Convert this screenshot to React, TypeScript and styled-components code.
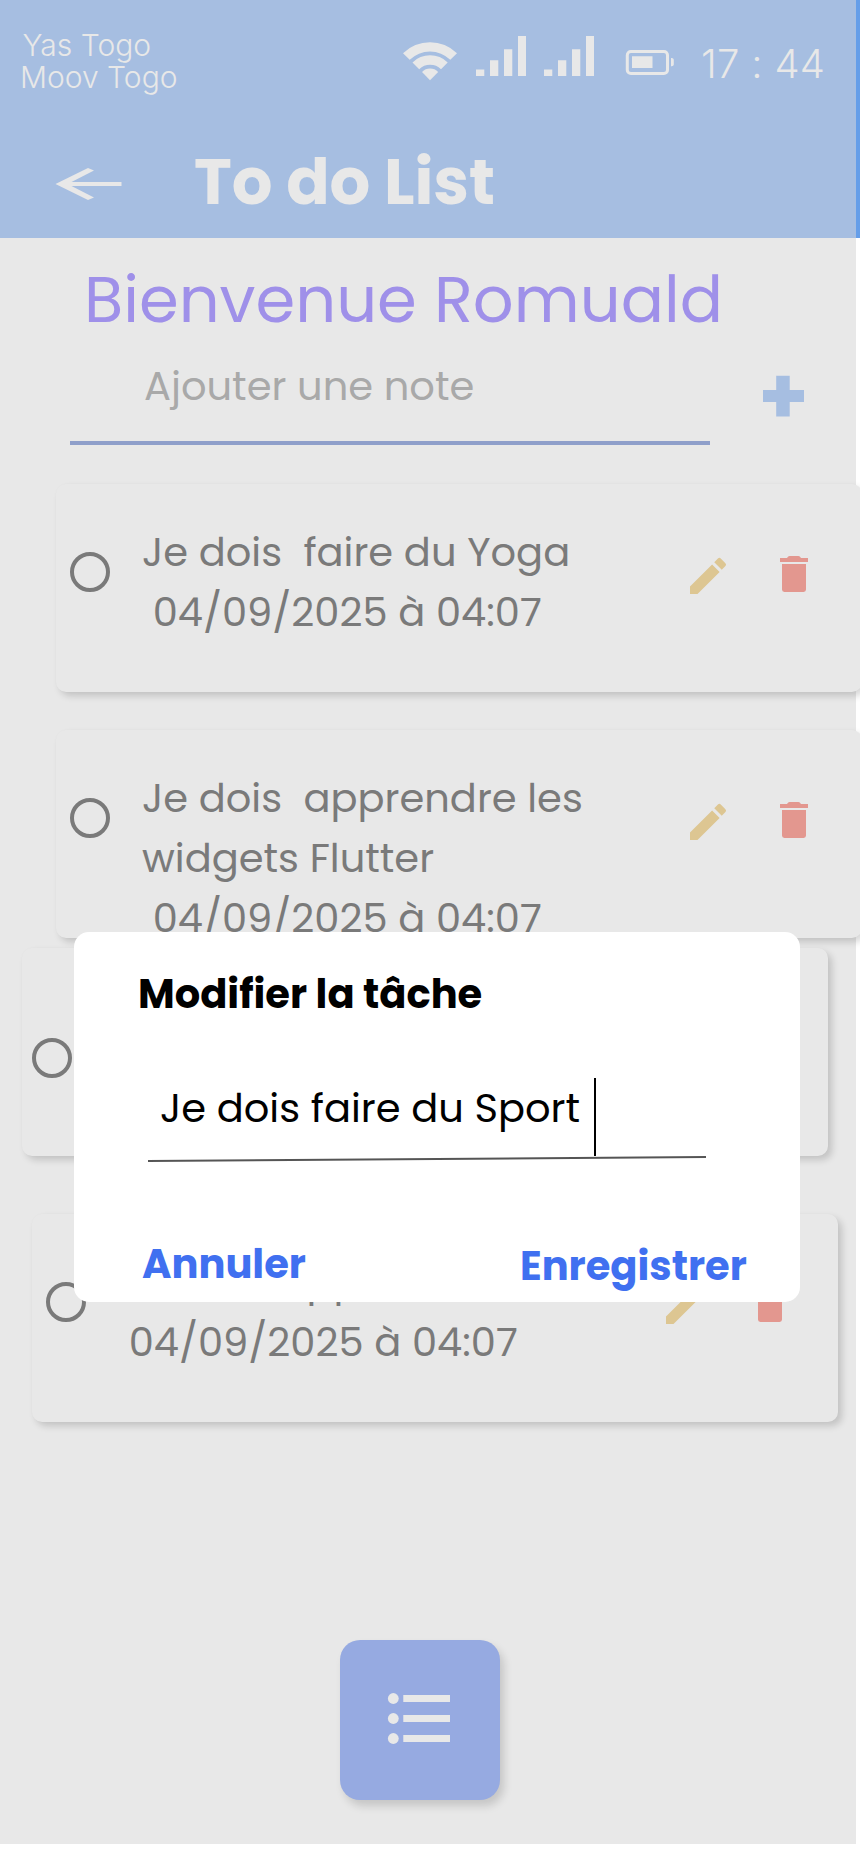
import React from "react";
import styled, { createGlobalStyle } from "styled-components";

const INK = "#e8e8e8";
const poppins = `"Poppins", "Inter", sans-serif`;

const GlobalStyle = createGlobalStyle`
  * { box-sizing: border-box; }
  html, body { margin: 0; padding: 0; background: #ffffff; }
  body { width: 860px; height: 1864px; overflow: hidden; }
  button { border: 0; padding: 0; background: none; font: inherit; color: inherit; display: block; }
`;

const Page = styled.div`
  position: relative;
  width: 860px;
  height: 1864px;
  overflow: hidden;
  background: #ffffff;
  font-family: ${poppins};
`;

const Screen = styled.main`
  width: 856px;
  height: 1844px;
  display: flex;
  flex-direction: column;
  background: ${INK};
`;

const Header = styled.header`
  flex: none;
  width: 860px;
  height: 238px;
  background: #a6bee1;
  border-right: 4px solid #659ee9;
  color: ${INK};
`;

const StatusBar = styled.div`
  display: flex;
  align-items: flex-start;
  height: 134px;
  padding-left: 20px;
  font-family: "Inter", sans-serif;
  font-weight: 350;
`;

const Carriers = styled.div`
  width: 383px;
  padding-top: 29px;
  font-size: 30px;
  line-height: 32px;
`;

const Carrier = styled.div<{ $indent?: number }>`
  padding-left: ${(p) => p.$indent ?? 0}px;
`;

const StatusIcon = styled.svg<{ $top: number; $gap: number }>`
  flex: none;
  display: block;
  margin: ${(p) => p.$top}px ${(p) => p.$gap}px 0 0;
  fill: currentColor;
`;

const Clock = styled.time`
  padding-top: 43px;
  font-size: 40px;
  line-height: 41px;
  letter-spacing: 0.3px;
  white-space: pre;
`;

const TitleBar = styled.div`
  display: flex;
  align-items: flex-start;
  padding-left: 55px;
`;

const BackButton = styled.button`
  width: 139px;
  padding-top: 33px;
`;

const Title = styled.h1`
  margin: 0;
  font-size: 64px;
  line-height: 96px;
  font-weight: 700;
`;

const Welcome = styled.h2`
  flex: none;
  margin: 14px 0 0 84px;
  height: 96px;
  font-size: 64px;
  line-height: 96px;
  font-weight: 400;
  color: #9f90e9;
`;

const Composer = styled.div`
  flex: none;
  display: flex;
  align-items: flex-start;
  height: 97px;
  margin: 8px 0 31px 70px;
`;

const ComposerField = styled.div`
  width: 640px;
  height: 89px;
  padding-left: 74px;
  border-bottom: 4px solid #8f9fca;
  font-size: 40px;
  line-height: 60px;
  color: #a9a9a9;
`;

const AddButton = styled.button`
  margin: 19px 0 0 53px;
`;

const Card = styled.article<{ $left: number; $gap: number }>`
  flex: none;
  display: flex;
  align-items: flex-start;
  width: 806px;
  height: 208px;
  margin: 0 0 ${(p) => p.$gap}px ${(p) => p.$left}px;
  border-radius: 10px;
  background: ${INK};
  box-shadow: 4px 4px 7px rgba(0, 0, 0, 0.16), 0 0 2px rgba(0, 0, 0, 0.018);
`;

const Radio = styled.span<{ $left: number; $top: number }>`
  flex: none;
  width: 40px;
  height: 40px;
  margin: ${(p) => p.$top}px ${(p) => 46 - p.$left}px 0 ${(p) => p.$left}px;
  border: 4px solid #7a7a7a;
  border-radius: 50%;
`;

const TaskText = styled.div`
  width: 542px;
  padding-top: 38px;
  font-size: 40px;
  line-height: 60px;
  white-space: pre;
  color: #7a7a7a;
`;

const IconButton = styled.button<{ $top: number; $gap?: number; $color: string }>`
  flex: none;
  width: 48px;
  height: 48px;
  margin: ${(p) => p.$top}px ${(p) => p.$gap ?? 0}px 0 0;
  color: ${(p) => p.$color};
`;

const Fab = styled.button`
  flex: none;
  width: 160px;
  height: 160px;
  margin-left: 340px;
  && {
    padding: 52px 0 0 47px;
    display: flex;
    align-items: flex-start;
  }
  border-radius: 20px;
  background: #96aae1;
  box-shadow: 4px 6px 8px rgba(0, 0, 0, 0.15);
`;

const Dialog = styled.section`
  position: absolute;
  left: 74px;
  top: 932px;
  width: 726px;
  height: 370px;
  padding-top: 32px;
  border-radius: 15px;
  background: #ffffff;
  color: #000000;
  font-size: 40px;
  line-height: 60px;
`;

const DialogTitle = styled.h3`
  margin: 0 0 54px 64px;
  font-size: 40px;
  font-weight: 700;
`;

const DialogField = styled.div`
  display: flex;
  height: 78px;
  padding-left: 86px;
`;

const FieldValue = styled.span`
  width: 434px;
  white-space: pre;
`;

const Caret = styled.span`
  width: 2px;
  height: 78px;
  background: #000000;
`;

const DialogLine = styled.svg`
  display: block;
  margin-left: 74px;
`;

const DialogActions = styled.div`
  display: flex;
  align-items: flex-start;
  padding: 70px 0 0 68px;
`;

const Action = styled.button<{ $width?: number; $top?: number }>`
  width: ${(p) => (p.$width ? `${p.$width}px` : "auto")};
  margin-top: ${(p) => p.$top ?? 0}px;
  text-align: left;
  line-height: 60px;
  font-weight: 700;
  color: #4070f0;
`;

const Wifi = () => (
  <StatusIcon width="54" height="40" viewBox="0 0 54 40" $top={41} $gap={19}>
    <path d="M0 12.3A38.5 38.5 0 0 1 54 12.3L47.3 18.8A29 29 0 0 0 6.7 18.8Z" />
    <path d="M9.5 21.5A24.8 24.8 0 0 1 44.7 21.5L38 28.2A15.6 15.6 0 0 0 16.2 28.2Z" />
    <path d="M19 31A11.3 11.3 0 0 1 35.2 31L27 39.2Z" />
  </StatusIcon>
);

const Signal = ({ gap }: { gap: number }) => (
  <StatusIcon width="50" height="40" viewBox="0 0 50 40" $top={36} $gap={gap}>
    <path d="M0 33.5h8.3V40H0zM14 24.3h8.3V40H14zM28 13.3h8.3V40H28zM42 0h8v40h-8z" />
  </StatusIcon>
);

const Battery = () => (
  <StatusIcon width="49" height="25" viewBox="0 0 49 25" $top={50} $gap={27}>
    <rect x="2.3" y="1.5" width="40.2" height="22" rx="3.6" fill="none" stroke="currentColor" strokeWidth="3" />
    <path d="M7 6.3h20.5v11.7H7zM46 8h.8a2 2 0 0 1 2 1.800v4.700a2 2 0 0 1-2 1.800H46z" />
  </StatusIcon>
);

const Pencil = () => (
  <svg width="48" height="48" viewBox="0 0 24 24" fill="currentColor">
    <path d="M3 17.25V21h3.75L17.81 9.94l-3.75-3.75L3 17.25zM20.71 7.04a.996.996 0 0 0 0-1.41l-2.34-2.34a.996.996 0 0 0-1.41 0l-1.83 1.83 3.75 3.75 1.83-1.83z" />
  </svg>
);

const Trash = () => (
  <svg width="48" height="48" viewBox="0 0 24 24" fill="currentColor">
    <path d="M6 19.8Q6 21 7.2 21h9.6q1.2 0 1.2-1.2V7H6zM19 4h-3.5l-.6-.7q-.3-.3-.7-.3H9.8q-.4 0-.7.3L8.5 4H5v2h14z" />
  </svg>
);

interface Task {
  text: string;
  left: number;
  gap: number;
  radio: [number, number];
}

const tasks: Task[] = [
  { text: "Je dois  faire du Yoga\n 04/09/2025 à 04:07", left: 56, gap: 38, radio: [14, 68] },
  { text: "Je dois  apprendre les\nwidgets Flutter\n 04/09/2025 à 04:07", left: 56, gap: 10, radio: [14, 68] },
  { text: "", left: 22, gap: 58, radio: [10, 90] },
  { text: "Je dois  apprendre\n 04/09/2025 à 04:07", left: 32, gap: 218, radio: [14, 68] },
];

const TaskCard = ({ text, left, gap, radio }: Task) => (
  <Card $left={left} $gap={gap}>
    <Radio $left={radio[0]} $top={radio[1]} />
    <TaskText>{text}</TaskText>
    <IconButton $top={68} $gap={38} $color="#ddc692" aria-label="Modifier">
      <Pencil />
    </IconButton>
    <IconButton $top={66} $color="#e3978f" aria-label="Supprimer">
      <Trash />
    </IconButton>
  </Card>
);

export default function App() {
  return (
    <Page>
      <GlobalStyle />
      <Screen>
        <Header>
          <StatusBar>
            <Carriers>
              <Carrier $indent={2.5}>Yas Togo</Carrier>
              <Carrier>Moov Togo</Carrier>
            </Carriers>
            <Wifi />
            <Signal gap={18} />
            <Signal gap={31} />
            <Battery />
            <Clock>17 : 44</Clock>
          </StatusBar>
          <TitleBar>
            <BackButton aria-label="Retour">
              <svg width="67" height="34" viewBox="0 0 67 34" fill={INK} display="block">
                <path d="M.5 17L33 1L39 3.5L16.5 15H66.5V19H16.5L39 30.5L33 33Z" />
              </svg>
            </BackButton>
            <Title>To do List</Title>
          </TitleBar>
        </Header>
        <Welcome>Bienvenue Romuald</Welcome>
        <Composer>
          <ComposerField>Ajouter une note</ComposerField>
          <AddButton aria-label="Ajouter">
            <svg width="41" height="42" viewBox="0 0 41 42" fill="#a6bee1" display="block">
              <path d="M13.2 .8h13.5v14.2H41v12H26.7v14.5H13.2V27H0V15h13.2z" />
            </svg>
          </AddButton>
        </Composer>
        {tasks.map((task, i) => (
          <TaskCard key={i} {...task} />
        ))}
        <Fab aria-label="Liste">
          <svg width="64" height="54" viewBox="0 0 64 54" fill={INK} display="block">
            {[6.5, 26.5, 46.5].map((y) => (
              <g key={y}>
                <circle cx="6.3" cy={y} r="5.4" />
                <rect x="16.3" y={y - 3.5} width="46.7" height="7" />
              </g>
            ))}
          </svg>
        </Fab>
      </Screen>
      <Dialog role="dialog">
        <DialogTitle>Modifier la tâche</DialogTitle>
        <DialogField>
          <FieldValue>Je dois faire du Sport</FieldValue>
          <Caret />
        </DialogField>
        <DialogLine width="560" height="8" viewBox="0 0 560 8">
          <path d="M0 5L558 1" stroke="#555555" strokeWidth="2" />
        </DialogLine>
        <DialogActions>
          <Action $width={378}>Annuler</Action>
          <Action $top={2}>Enregistrer</Action>
        </DialogActions>
      </Dialog>
    </Page>
  );
}
